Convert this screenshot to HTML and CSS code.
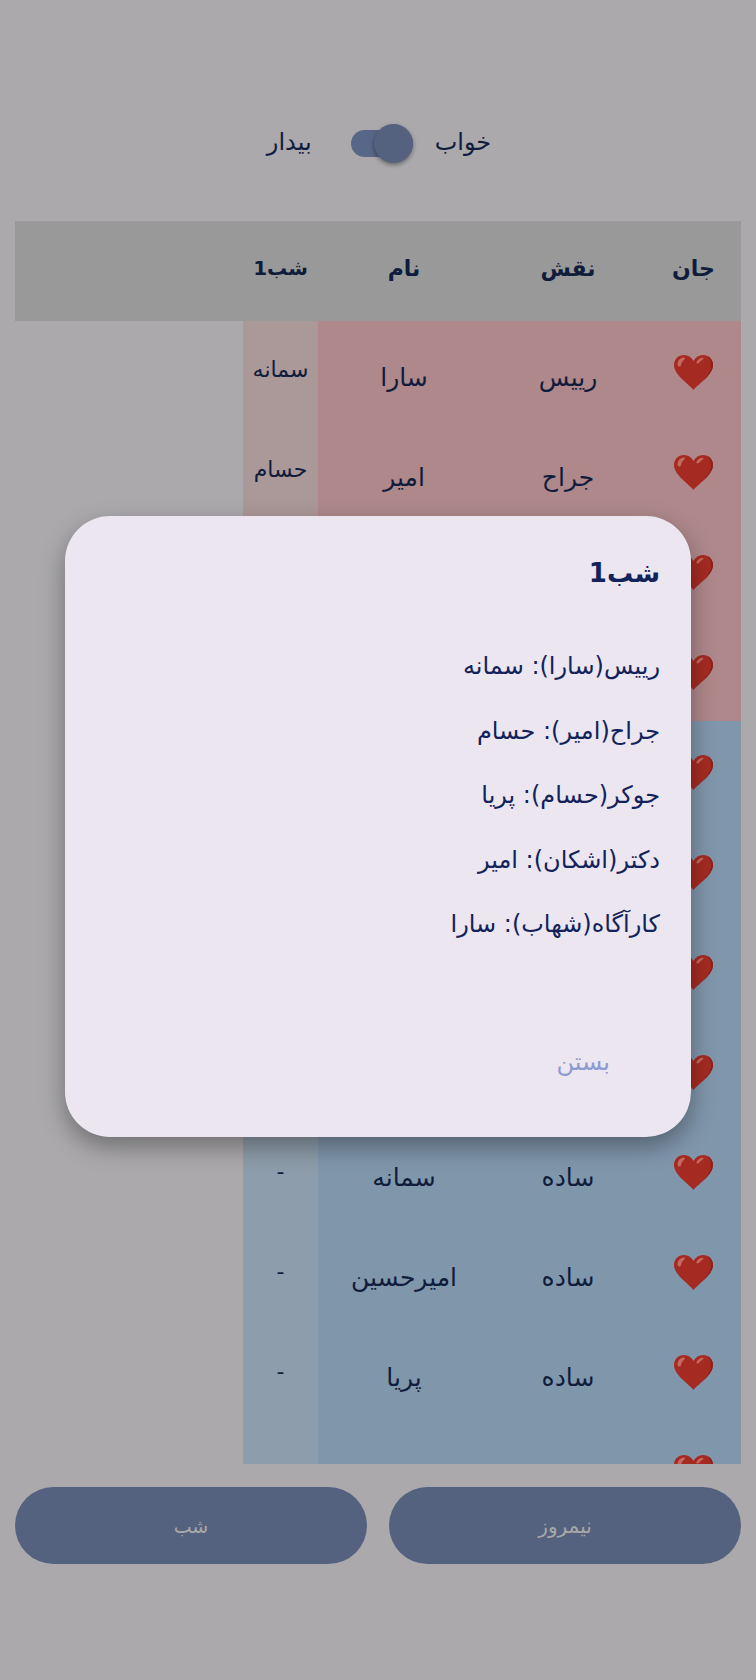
FILE: index.html
```html
<!DOCTYPE html>
<html lang="fa" dir="rtl">
<head>
<meta charset="utf-8">
<title>شب</title>
<link rel="stylesheet" href="styles.css">
</head>
<body>
<svg class="defs" width="0" height="0" aria-hidden="true">
  <symbol id="heart" viewBox="0 0 39 35">
    <path fill="#a52b22" d="M19.5 35C15 29 0 20 0 10 0 4 4.500 0 10 0c4 0 7.500 2 9.500 6C21.500 2 25 0 29 0c5.500 0 10 4 10 10C39 20 24 29 19.500 35z"/>
    <path fill="#8b2219" d="M33.500 1C37 2.800 39 6 39 10 39 20 24 29 19.500 35c4.500-6 17.500-14 17.500-24.500 0-4-1.300-7.300-3.500-9.500z"/>
    <path fill="#c46a62" d="M3.500 9C4 5.500 6.500 2.800 9.500 2.500c1.500-.2 2 1.200.8 2C8.300 6 7.400 8 6.800 10.500c-.5 2-3.500 1-3.300-1.500zM22.500 7c1.100-2.200 3.200-4 5.600-4.300 1.300-.2 1.800 1 .7 1.700-1.500.9-2.800 2-3.800 3.400-1 1.300-3.200.5-2.500-.8z"/>
  </symbol>
</svg>

<main class="page">
  <div class="toggle-row">
    <span class="toggle-label">خواب</span>
    <span class="switch"><span class="switch-thumb"></span></span>
    <span class="toggle-label">بیدار</span>
  </div>

  <section class="table">
    <div class="row head">
      <div class="cell c-life">جان</div>
      <div class="cell c-role">نقش</div>
      <div class="cell c-name">نام</div>
      <div class="cell c-night">شب1</div>
    </div>
    <div class="rows">
      <div class="row mafia"><div class="cell c-life"><svg class="heart"><use href="#heart"/></svg></div><div class="cell c-role">رییس</div><div class="cell c-name">سارا</div><div class="cell c-night">سمانه</div></div>
      <div class="row mafia"><div class="cell c-life"><svg class="heart"><use href="#heart"/></svg></div><div class="cell c-role">جراح</div><div class="cell c-name">امیر</div><div class="cell c-night">حسام</div></div>
      <div class="row mafia"><div class="cell c-life"><svg class="heart"><use href="#heart"/></svg></div><div class="cell c-role">جوکر</div><div class="cell c-name">حسام</div><div class="cell c-night">پریا</div></div>
      <div class="row mafia"><div class="cell c-life"><svg class="heart"><use href="#heart"/></svg></div><div class="cell c-role">ساده</div><div class="cell c-name">مینا</div><div class="cell c-night dash">-</div></div>
      <div class="row citizen"><div class="cell c-life"><svg class="heart"><use href="#heart"/></svg></div><div class="cell c-role">دکتر</div><div class="cell c-name">اشکان</div><div class="cell c-night">امیر</div></div>
      <div class="row citizen"><div class="cell c-life"><svg class="heart"><use href="#heart"/></svg></div><div class="cell c-role">کارآگاه</div><div class="cell c-name">شهاب</div><div class="cell c-night">سارا</div></div>
      <div class="row citizen"><div class="cell c-life"><svg class="heart"><use href="#heart"/></svg></div><div class="cell c-role">ساده</div><div class="cell c-name">علی</div><div class="cell c-night dash">-</div></div>
      <div class="row citizen"><div class="cell c-life"><svg class="heart"><use href="#heart"/></svg></div><div class="cell c-role">ساده</div><div class="cell c-name">رضا</div><div class="cell c-night dash">-</div></div>
      <div class="row citizen"><div class="cell c-life"><svg class="heart"><use href="#heart"/></svg></div><div class="cell c-role">ساده</div><div class="cell c-name">سمانه</div><div class="cell c-night dash">-</div></div>
      <div class="row citizen"><div class="cell c-life"><svg class="heart"><use href="#heart"/></svg></div><div class="cell c-role">ساده</div><div class="cell c-name">امیرحسین</div><div class="cell c-night dash">-</div></div>
      <div class="row citizen"><div class="cell c-life"><svg class="heart"><use href="#heart"/></svg></div><div class="cell c-role">ساده</div><div class="cell c-name">پریا</div><div class="cell c-night dash">-</div></div>
      <div class="row citizen"><div class="cell c-life"><svg class="heart"><use href="#heart"/></svg></div><div class="cell c-role"></div><div class="cell c-name"></div><div class="cell c-night"></div></div>
    </div>
  </section>

  <div class="actions">
    <button class="action action-noon">نیمروز</button>
    <button class="action action-night">شب</button>
  </div>
</main>

<aside class="dialog">
  <h2 class="dialog-title">شب1</h2>
  <ul class="dialog-list">
    <li>رییس(سارا): سمانه</li>
    <li>جراح(امیر): حسام</li>
    <li>جوکر(حسام): پریا</li>
    <li>دکتر(اشکان): امیر</li>
    <li>کارآگاه(شهاب): سارا</li>
  </ul>
  <button class="dialog-close">بستن</button>
</aside>
</body>
</html>
```

FILE: styles.css
```css
* { box-sizing: border-box; }
html, body { margin: 0; height: 100%; }
body {
  width: 756px;
  height: 1680px;
  position: relative;
  overflow: hidden;
  background: #aba9ac;
  color: #101c3c;
  font-family: "DejaVu Sans", "Noto Sans", sans-serif;
}
.defs { position: absolute; }
.page {
  display: flex;
  flex-direction: column;
  height: 100%;
  padding: 0 15px;
}
.toggle-row {
  height: 221px;
  padding: 124px 0 0 2px;
  display: flex;
  justify-content: center;
  align-items: flex-start;
  gap: 22px;
}
.toggle-label { font-size: 24px; line-height: 37px; }
.switch {
  position: relative;
  display: block;
  width: 62px;
  height: 27px;
  margin: 6px 0 0 17px;
  border-radius: 14px;
  background: #586788;
}
.switch-thumb {
  position: absolute;
  top: -6px;
  right: 0;
  width: 39px;
  height: 39px;
  border-radius: 50%;
  background: #54627f;
  box-shadow: 0 2px 4px rgba(0, 0, 0, .4);
}
.table { display: flex; flex-direction: column; }
.row { display: flex; height: 100px; }
.head { background: #989998; font-weight: 700; }
.rows { height: 1143px; overflow: hidden; }
.cell {
  display: flex;
  align-items: center;
  justify-content: center;
  font-size: 25px;
  padding-top: 13px;
}
.c-life { width: 95px; padding-top: 2px; }
.c-role { width: 156px; }
.c-name { width: 172px; }
.c-night { width: 75px; font-size: 22px; padding-top: 0; padding-bottom: 4px; }
.c-night.dash { padding-bottom: 0; }
.head .cell { font-size: 22px; padding-top: 0; padding-bottom: 6px; }
.head .c-night { font-size: 20px; }
.mafia .c-life, .mafia .c-role, .mafia .c-name { background: #ae888b; }
.mafia .c-night { background: #ab9899; }
.citizen .c-life, .citizen .c-role, .citizen .c-name { background: #8096ab; }
.citizen .c-night { background: #8e9dab; }
.heart { width: 39px; height: 35px; }
.actions {
  display: flex;
  gap: 22px;
  margin-top: 23px;
}
.action {
  flex: 1;
  height: 77px;
  border: 0;
  border-radius: 39px;
  background: #54627f;
  color: #a8a8a8;
  font: 20px "DejaVu Sans", sans-serif;
}
.action-night { font-size: 19px; }
.dialog {
  position: absolute;
  left: 65px;
  top: 516px;
  width: 626px;
  height: 621px;
  padding: 32px 31px 0;
  border-radius: 45px;
  background: #ece6f1;
  color: #12225a;
  box-shadow: 0 10px 24px rgba(0, 0, 0, .35);
  display: flex;
  flex-direction: column;
}
.dialog-title { margin: 0; font-size: 26px; line-height: 50px; }
.dialog-list {
  list-style: none;
  margin: 44px 0 0;
  padding: 0;
  font-size: 24px;
  display: flex;
  flex-direction: column;
  gap: 16.5px;
}
.dialog-list li { line-height: 48px; }
.dialog-close {
  align-self: flex-start;
  margin: 90px 48px 0 0;
  padding: 0 2px;
  border: 0;
  background: none;
  color: #8c9bd0;
  font: 24px/48px "DejaVu Sans", sans-serif;
}
```
